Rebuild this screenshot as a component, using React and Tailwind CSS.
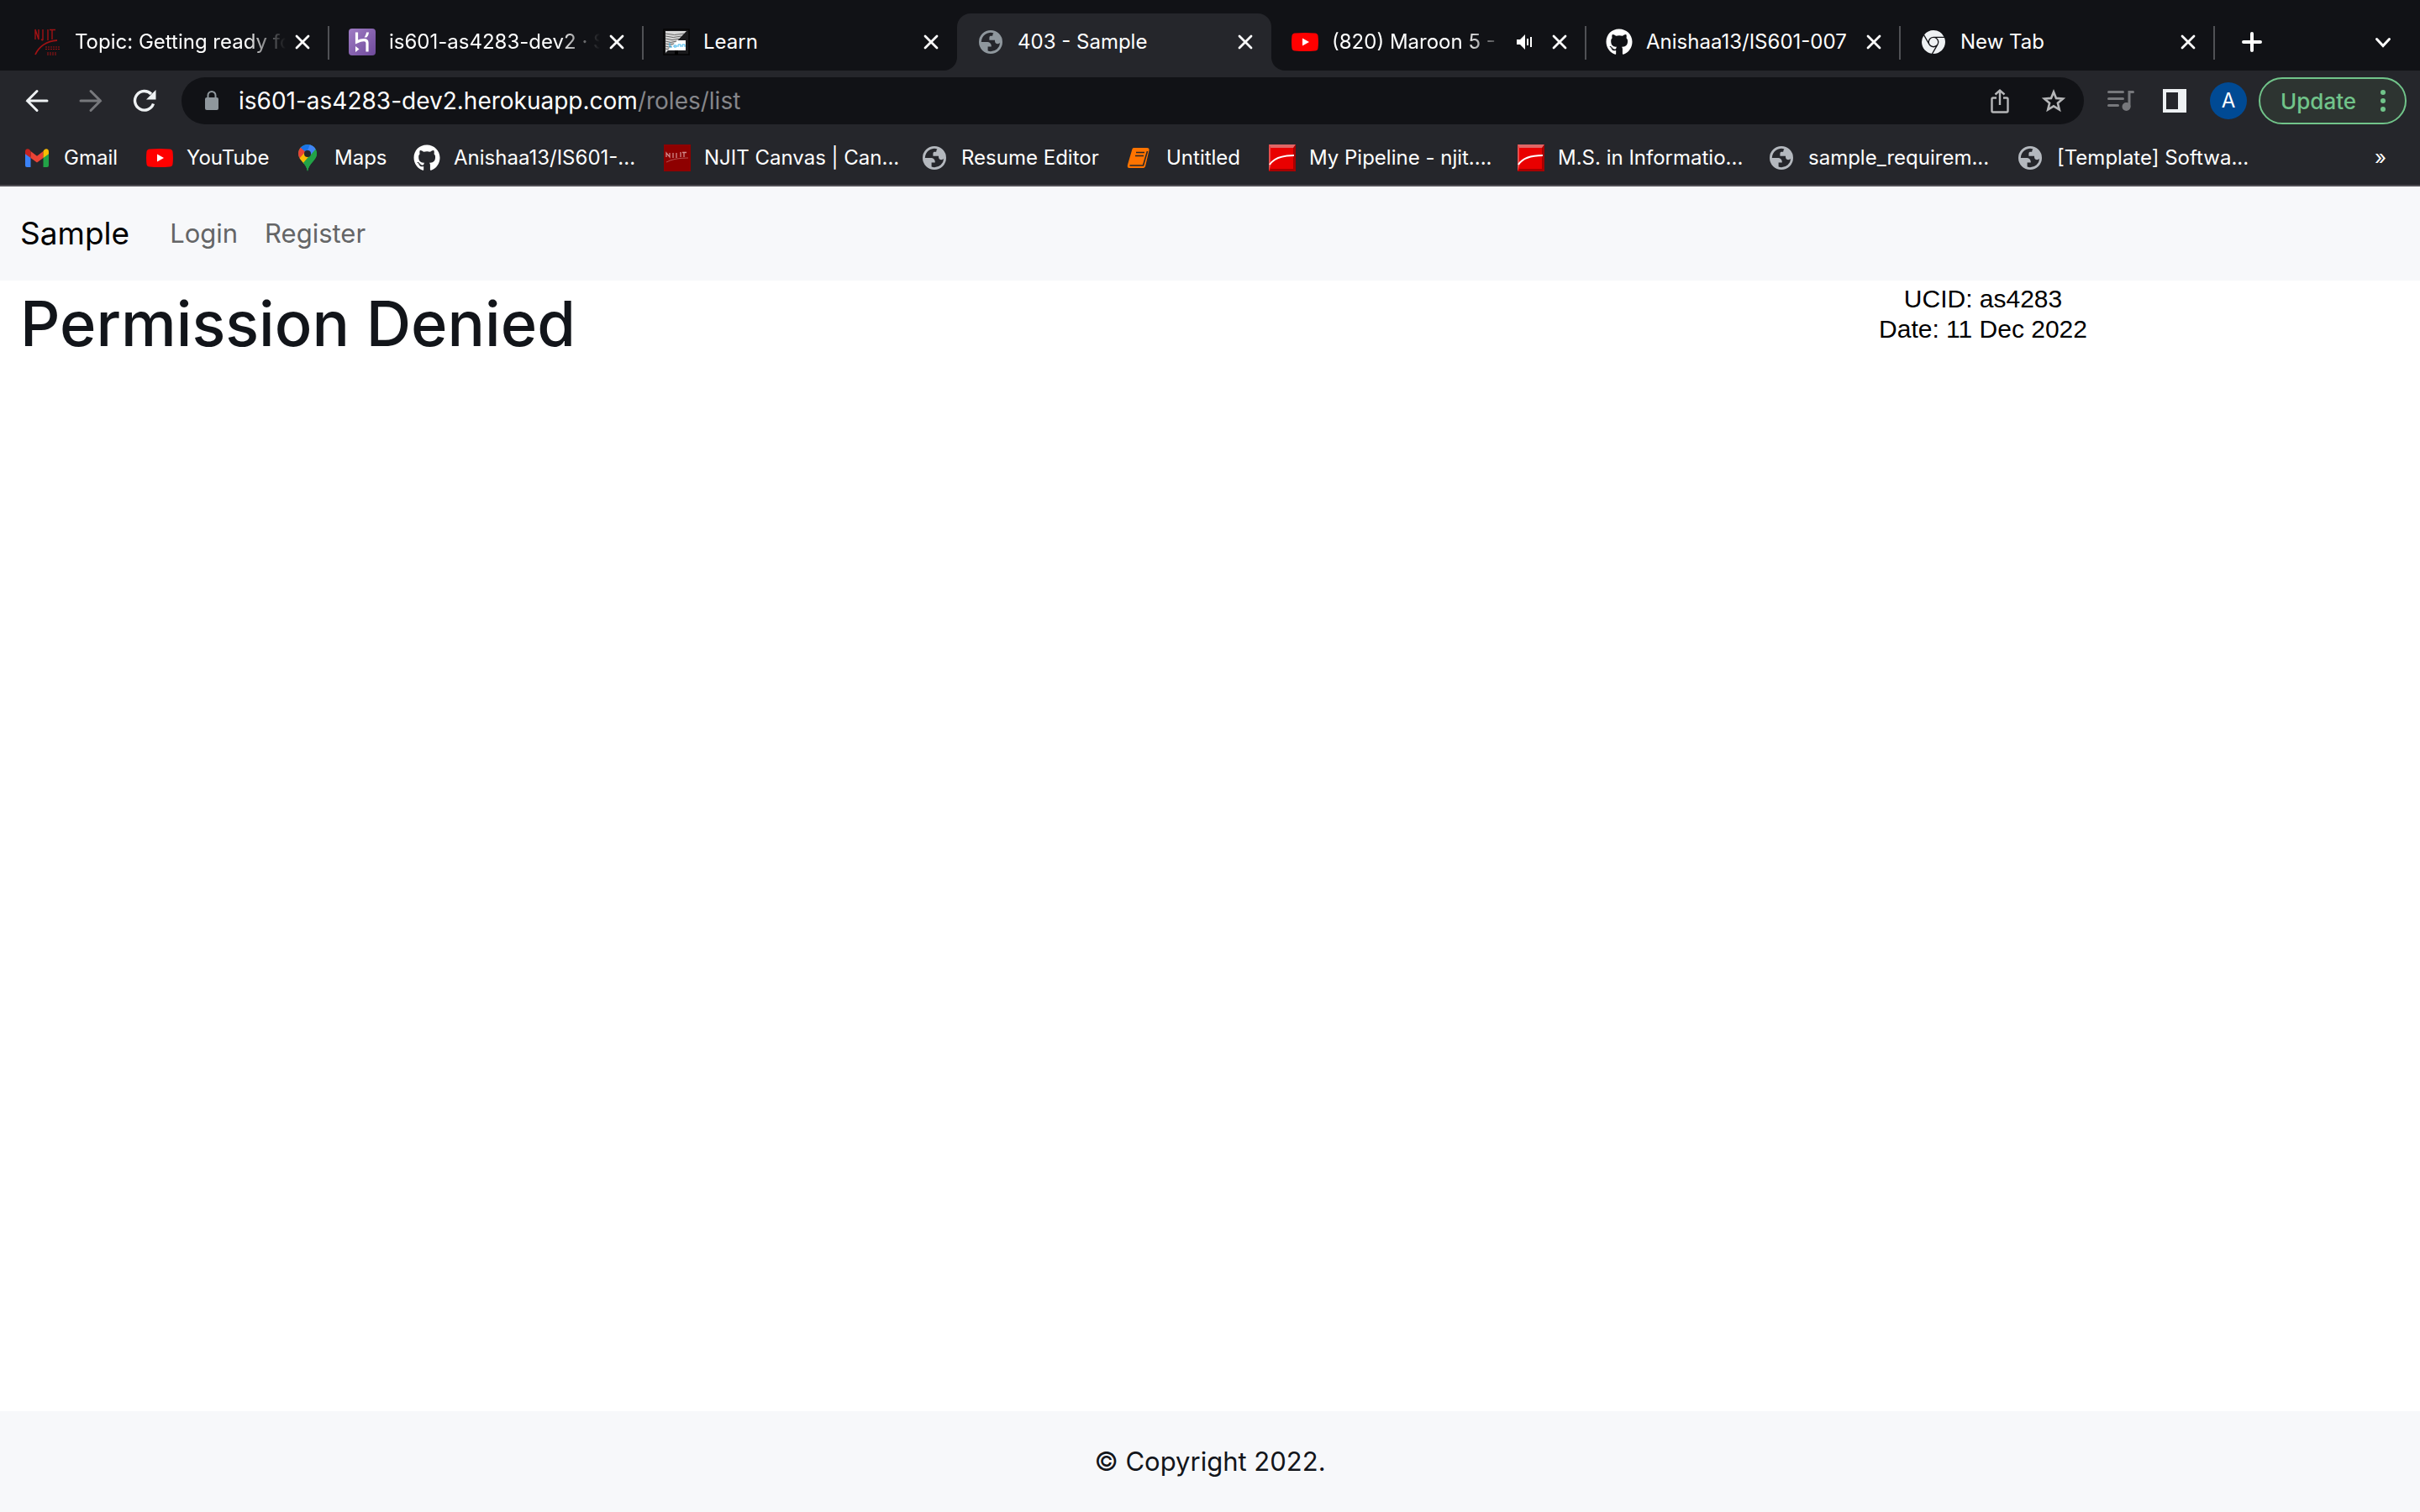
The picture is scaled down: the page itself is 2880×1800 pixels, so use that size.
import React from 'react';
import { FaGithub } from 'react-icons/fa';
import { SiGooglechrome } from 'react-icons/si';

function YouTubeIcon() {
  return (
    <svg viewBox="0 0 32 32" className="size-8">
      <path d="M4 5.4Q16 4.4 28 5.4Q31 5.6 31.5 8.5Q32.4 16 31.5 23.5Q31 26.4 28 26.6Q16 27.6 4 26.6Q1 26.4 .5 23.5Q-.4 16 .5 8.5Q1 5.6 4 5.4Z" fill="#f00" />
      <path d="M13 11.5v9l8-4.5z" fill="#fff" />
    </svg>
  );
}

function GlobeIcon({ color = '#b4b8be' }) {
  return (
    <svg viewBox="0 0 16 16" className="size-8">
      <path
        fill={color}
        fillRule="evenodd"
        d="M8 1a7 7 0 1 0 0 14A7 7 0 0 0 8 1ZM2.4 8h3.2c1.9 0 2.9 1 2.8 2.8H6.3v2.5c.5.2 1.1.3 1.7.3a5.6 5.6 0 0 0 5.6-5.2c-.4.5-.9.7-1.4.7-1.1 0-1.7-.6-1.7-1.7V6.9H7.2V5.5c0-.8.4-1.1 1.1-1.1h.8c0-.7.2-1.3.6-1.7A5.6 5.6 0 0 0 2.4 8Z"
      />
    </svg>
  );
}

function NjitMark() {
  return (
    <svg viewBox="0 0 32 32" className="size-8" fill="none" stroke="#a01214">
      <path d="M1 13V1l4 12V1M10 1v13M10 14l-2-1M16 1v13M21 1v12M18 1.5h7" strokeWidth="1.4" />
      <path d="M1 31C5 22 14 15 27 14" strokeWidth="1.8" />
      <path d="M13 22h18M13 24.5h18M15 29h12M15 31h11" strokeWidth="1.2" strokeDasharray="2 1" />
    </svg>
  );
}

function HerokuIcon() {
  return (
    <svg viewBox="0 0 32 32" className="size-8">
      <defs>
        <linearGradient id="heroku" x1="0" y1="0" x2="1" y2="1">
          <stop offset="0" stopColor="#9f7cc4" />
          <stop offset="1" stopColor="#6f4a9b" />
        </linearGradient>
      </defs>
      <rect width="32" height="32" rx="4" fill="url(#heroku)" />
      <path d="M9.500 4.500V16C16 13 22 12.500 22 17v10.500" fill="none" stroke="#fff" strokeWidth="3.2" />
      <path d="M8 21v7l4.500-3.500zM18.500 10.500c1.500-2 2.300-4 2.500-6h3c-.3 2.500-1.200 4.500-2.700 6z" fill="#fff" />
    </svg>
  );
}

function LearnIcon() {
  return (
    <svg viewBox="0 0 32 32" className="size-8">
      <rect x="1" y="1" width="30" height="30" fill="#1a1a1c" stroke="#050505" strokeWidth="1.5" />
      <path d="M9 14h18v12H4z" fill="#fff" />
      <path d="M3 3h25L3 29z" fill="#d9d9d9" />
      <path d="M3 6q10 3 22 0M3 9q9 3 19 0M3 12q8 3 16 0M3 15q6 3 13 0M3 18q5 2 10 0M3 21q4 2 7 0M3 24q2 1 4 0" fill="none" stroke="#666" strokeWidth="1" />
      <path d="M8 17v5h3M13 20h3v2h-3zM18 22v-3h3v3M23 22v-3h3v3" fill="none" stroke="#3bb3ea" strokeWidth="1" />
      <path d="M14 26h4v5h-4z" fill="#000" />
    </svg>
  );
}

function GmailIcon() {
  return (
    <svg viewBox="0 0 32 32" className="size-8">
      <path d="M2 9.5 8.5 14v13H4q-2 0-2-2z" fill="#3b82f6" />
      <path d="M30 9.5 23.5 14v13H28q2 0 2-2z" fill="#22a347" />
      <path d="M8.5 8 16 13.7 23.5 8v8L16 21.6 8.5 16z" fill="#ea4335" />
      <path d="M2 8.5C2 5 5.5 4.5 7.5 6.5L8.5 8v8L2 11.2z" fill="#c5221f" />
      <path d="M30 8.5C30 5 26.5 4.5 24.5 6.5L23.5 8v8l6.5-4.8z" fill="#fbbc04" />
    </svg>
  );
}

function MapsIcon() {
  return (
    <svg viewBox="0 0 32 32" className="size-8">
      <clipPath id="pin">
        <path d="M16 0C9.500 0 5 5 5 11c0 8 9 10 11 21 2-11 11-13 11-21C27 5 22.500 0 16 0Z" />
      </clipPath>
      <g clipPath="url(#pin)">
        <rect width="32" height="32" fill="#22a347" />
        <path d="M0 0h32v3L16 14 7 4z" fill="#1a73e8" />
        <path d="M7.5 3.5 16 11 6 21H0V3z" fill="#ea4335" />
        <path d="M5 18 14 8l7 6L10 25z" fill="#fbbc04" />
        <path d="M27 3 10 23l6 9h16V6z" fill="#22a347" />
        <path d="M19 0h13L27 4l-7 8-4-5z" fill="#4285f4" />
      </g>
      <circle cx="16" cy="11" r="4" fill="#25262b" />
    </svg>
  );
}

function CanvasIcon() {
  return (
    <svg viewBox="0 0 32 32" className="size-8" fill="none" stroke="#d08a8a">
      <rect width="32" height="32" fill="#8e0000" stroke="none" />
      <path d="M3 15v-5l4 5v-5M11 10v6M15 10v6M20 9v6M24 9v6M22 9.5h5" strokeWidth="1.3" />
      <path d="M3 21q9-5 26-5" strokeWidth="1" opacity=".6" />
    </svg>
  );
}

function BookIcon() {
  return (
    <svg viewBox="0 0 32 32" className="size-8">
      <path d="M9 4h16q3 0 2.500 3l-4 17q-.5 4-3 4H4q-3 0-2-4L7 7q.5-3 2-3Z" fill="#ff7400" />
      <path d="M12 9.500h10M11 13.500h10M4.500 25H20.500L25.500 8" fill="none" stroke="#25262b" strokeWidth="1.600" />
    </svg>
  );
}

function PipelineIcon() {
  return (
    <svg viewBox="0 0 32 32" className="size-8">
      <rect width="32" height="32" fill="#e90000" />
      <path d="M0 0h32l-2 4H2z" fill="#e06666" />
      <path d="M0 0l2 4v22l-2 6z" fill="#e84c4c" />
      <path d="M32 0v32H0l2-3h27V4z" fill="#a80000" />
      <path d="M1 24C6 16 16 13 30 13" fill="none" stroke="#fff" strokeWidth="2" />
    </svg>
  );
}

function CloseIcon() {
  return (
    <svg viewBox="0 0 32 32" className="size-8" fill="none" stroke="#fff" strokeWidth="2.8" strokeLinecap="round">
      <path d="M9 9l14 14M23 9 9 23" />
    </svg>
  );
}

function SpeakerIcon() {
  return (
    <svg viewBox="0 0 20 20" className="size-5" fill="#fff">
      <path d="M1 7h4l6-6v18l-6-6H1zM13 6h2v8h-2zM17 4h2v12h-2z" />
    </svg>
  );
}

const tabs = [
  { title: 'Topic: Getting ready fo', icon: <NjitMark />, sep: true, fade: true },
  { title: 'is601-as4283-dev2 · S', icon: <HerokuIcon />, sep: true, fade: true },
  { title: 'Learn', icon: <LearnIcon /> },
  { title: '403 - Sample', icon: <GlobeIcon color="#8f979d" />, active: true },
  { title: '(820) Maroon 5 -', icon: <YouTubeIcon />, sep: true, audio: true, fade: true },
  { title: 'Anishaa13/IS601-007', icon: <FaGithub className="size-8" />, sep: true },
  { title: 'New Tab', icon: <SiGooglechrome className="mx-0.5 size-7 text-[#eef1f3]" />, sep: true },
];

function Tab({ title, icon, sep, active, audio, fade }) {
  return (
    <div
      className={
        'relative flex h-[68px] w-[374px] min-w-0 items-center pr-[15px] pl-6 ' +
        (active ? 'rounded-t-2xl bg-[#25262b]' : '')
      }
    >
      {active && (
        <>
          <span className="absolute bottom-0 -left-4 size-4 bg-[#25262b]">
            <span className="block size-4 rounded-br-2xl bg-[#111216]" />
          </span>
          <span className="absolute -right-4 bottom-0 size-4 bg-[#25262b]">
            <span className="block size-4 rounded-bl-2xl bg-[#111216]" />
          </span>
        </>
      )}
      <button className="flex min-w-0 flex-1 items-center gap-4 text-left">
        <span className="shrink-0">{icon}</span>
        <span
          className={
            'min-w-0 flex-1 overflow-hidden whitespace-nowrap ' + (fade ? 'mask-r-from-[calc(100%-48px)]' : '')
          }
        >
          {title}
        </span>
      </button>
      {audio && (
        <span className="mr-4 ml-3">
          <SpeakerIcon />
        </span>
      )}
      <button aria-label={'Close ' + title} className={audio ? '' : 'ml-1'}>
        <CloseIcon />
      </button>
      {sep && <span className="absolute top-[15px] -right-px h-10 w-0.5 bg-[#505155]" />}
    </div>
  );
}

const bookmarks = [
  { label: 'Gmail', icon: <GmailIcon />, width: 'w-[146px]' },
  { label: 'YouTube', icon: <YouTubeIcon />, width: 'w-[176px]' },
  { label: 'Maps', icon: <MapsIcon />, width: 'w-[142px]' },
  { label: 'Anishaa13/IS601-...', icon: <FaGithub className="size-8" />, width: 'w-[298px]' },
  { label: 'NJIT Canvas | Can...', icon: <CanvasIcon />, width: 'w-[306px]' },
  { label: 'Resume Editor', icon: <GlobeIcon />, width: 'w-[244px]' },
  { label: 'Untitled', icon: <BookIcon />, width: 'w-[170px]' },
  { label: 'My Pipeline - njit....', icon: <PipelineIcon />, width: 'w-[296px]' },
  { label: 'M.S. in Informatio...', icon: <PipelineIcon />, width: 'w-[298px]' },
  { label: 'sample_requirem...', icon: <GlobeIcon />, width: 'w-[296px]' },
  { label: '[Template] Softwa...', icon: <GlobeIcon />, width: 'w-[300px]' },
];

function TabStrip() {
  return (
    <div className="flex h-[84px] items-end bg-[#111216] pl-[17px] text-[24px]">
      {tabs.map((t) => (
        <Tab key={t.title} {...t} />
      ))}
      <div className="flex h-[68px] flex-1 items-center justify-between pr-7 pl-7">
        <button aria-label="New tab">
          <svg viewBox="0 0 32 32" className="size-8" stroke="#fff" strokeWidth="4" strokeLinecap="round">
            <path d="M17 6v20M7 16h20" />
          </svg>
        </button>
        <button aria-label="Search tabs">
          <svg viewBox="0 0 32 32" className="size-8" fill="none" stroke="#fff" strokeWidth="3" strokeLinecap="round">
            <path d="m8.500 12.500 7.500 8 7.500-8" />
          </svg>
        </button>
      </div>
    </div>
  );
}

function Toolbar() {
  return (
    <div className="flex h-[72px] items-center pr-4 pl-7">
      <div className="flex gap-8">
        <button aria-label="Back">
          <svg viewBox="0 0 32 32" className="size-8" fill="none" stroke="#eef1f3" strokeWidth="3" strokeLinecap="round">
            <path d="M28 16H4.500M16 4.500 4.500 16 16 27.500" />
          </svg>
        </button>
        <button aria-label="Forward">
          <svg viewBox="0 0 32 32" className="size-8" fill="none" stroke="#77787c" strokeWidth="3" strokeLinecap="round">
            <path d="M4 16h23.500M16 4.500 27.500 16 16 27.500" />
          </svg>
        </button>
        <button aria-label="Reload">
          <svg viewBox="0 0 32 32" className="size-8" fill="none">
            <path d="M26.500 19.500A11.300 11.300 0 1 1 24 8" stroke="#eef1f3" strokeWidth="3.4" />
            <path d="M29.500 3v11.500H18z" fill="#eef1f3" />
          </svg>
        </button>
      </div>
      <div className="ml-7 flex h-14 flex-1 items-center rounded-full bg-[#111216] pr-5 pl-5">
        <svg viewBox="0 0 32 32" className="size-8">
          <rect x="8" y="12" width="16" height="15" rx="2" fill="#8f979d" />
          <path d="M11.500 13V9.500a4.500 4.500 0 0 1 9 0V13" fill="none" stroke="#8f979d" strokeWidth="2" />
        </svg>
        <button className="ml-4 flex-1 text-left text-[28px] text-white">
          is601-as4283-dev2.herokuapp.com<span className="text-[#85868a]">/roles/list</span>
        </button>
        <div className="flex gap-8">
          <button aria-label="Share">
            <svg viewBox="0 0 32 32" className="size-8" fill="none" stroke="#b5b6b8" strokeWidth="2.4">
              <path d="M12 12.500H8q-1.500 0-1.500 1.500v14q0 1.500 1.500 1.500h16q1.500 0 1.500-1.500V14q0-1.500-1.500-1.500h-4M16 21V4M10.500 8.500 16 3.500l5.500 5" />
            </svg>
          </button>
          <button aria-label="Bookmark this page">
            <svg viewBox="0 0 32 32" className="size-8" fill="none" stroke="#b5b6b8" strokeWidth="2.6">
              <path d="m16 5.500 3 7.400 8 .6-6.100 5.200 1.900 7.800L16 22.300l-6.800 4.200 1.900-7.800L5 13.500l8-.6z" />
            </svg>
          </button>
        </div>
      </div>
      <div className="ml-7 flex items-center gap-8">
        <button aria-label="Media controls">
          <svg viewBox="0 0 32 32" className="size-8" fill="none" stroke="#77787c" strokeWidth="3" strokeLinecap="round">
            <path d="M1.500 5.500h17M1.500 13.500h17M1.500 21.500h11" />
            <path d="M26 23V5.500h4.500" />
            <circle cx="22.500" cy="23" r="3.500" fill="#77787c" />
          </svg>
        </button>
        <button aria-label="Side panel">
          <svg viewBox="0 0 32 32" className="size-8" fill="#eef1f3" fillRule="evenodd">
            <path d="M2 2h28v28H2zM6 6v20h14V6z" />
          </svg>
        </button>
      </div>
      <button aria-label="Profile" className="ml-[26px] size-11 rounded-full bg-[#004a94] text-center text-[24px] text-white">
        A
      </button>
      <button className="ml-3.5 flex h-14 w-44 items-center justify-between rounded-full border-2 border-[#71c48a] bg-[#2d3431] pr-[22px] pl-6 text-[26px] font-medium text-[#71c48a]">
        Update
        <svg viewBox="0 0 8 28" className="h-7 w-2" fill="currentColor">
          <circle cx="4" cy="4" r="3" />
          <circle cx="4" cy="14" r="3" />
          <circle cx="4" cy="24" r="3" />
        </svg>
      </button>
    </div>
  );
}

function BookmarksBar() {
  return (
    <div className="flex h-[66px] items-center justify-between border-b-2 border-[#504f54] pr-10 pl-7 text-[24px]">
      <nav className="flex">
        {bookmarks.map((b) => (
          <a key={b.label} href="#" className={'flex items-center gap-4 whitespace-nowrap ' + b.width}>
            <span className="shrink-0">{b.icon}</span>
            {b.label}
          </a>
        ))}
      </nav>
      <button aria-label="More bookmarks">»</button>
    </div>
  );
}

export default function App() {
  return (
    <div className="flex min-h-screen flex-col bg-white font-['Inter',sans-serif]">
      <header className="bg-[#25262b] text-white">
        <TabStrip />
        <Toolbar />
        <BookmarksBar />
      </header>
      <nav className="flex h-28 items-center bg-[#f7f8fa] px-6">
        <a href="#" className="text-[37px] text-black">
          Sample
        </a>
        <a href="#" className="ml-12 text-[31px] text-[#646566]">
          Login
        </a>
        <a href="#" className="ml-8 text-[31px] text-[#646566]">
          Register
        </a>
      </nav>
      <main className="flex flex-1 items-start justify-between pr-[396px] pl-6">
        <h1 className="text-[74px] leading-[102px] font-medium text-[#12151a]">Permission Denied</h1>
        <p className="mt-1 text-center font-['Liberation_Sans',sans-serif] text-[30px] leading-9 text-black">
          UCID: as4283
          <br />
          Date: 11 Dec 2022
        </p>
      </main>
      <footer className="flex h-[120px] items-center justify-center bg-[#f7f8fa] text-[31px] text-[#12151a]">
        © Copyright 2022.
      </footer>
    </div>
  );
}
